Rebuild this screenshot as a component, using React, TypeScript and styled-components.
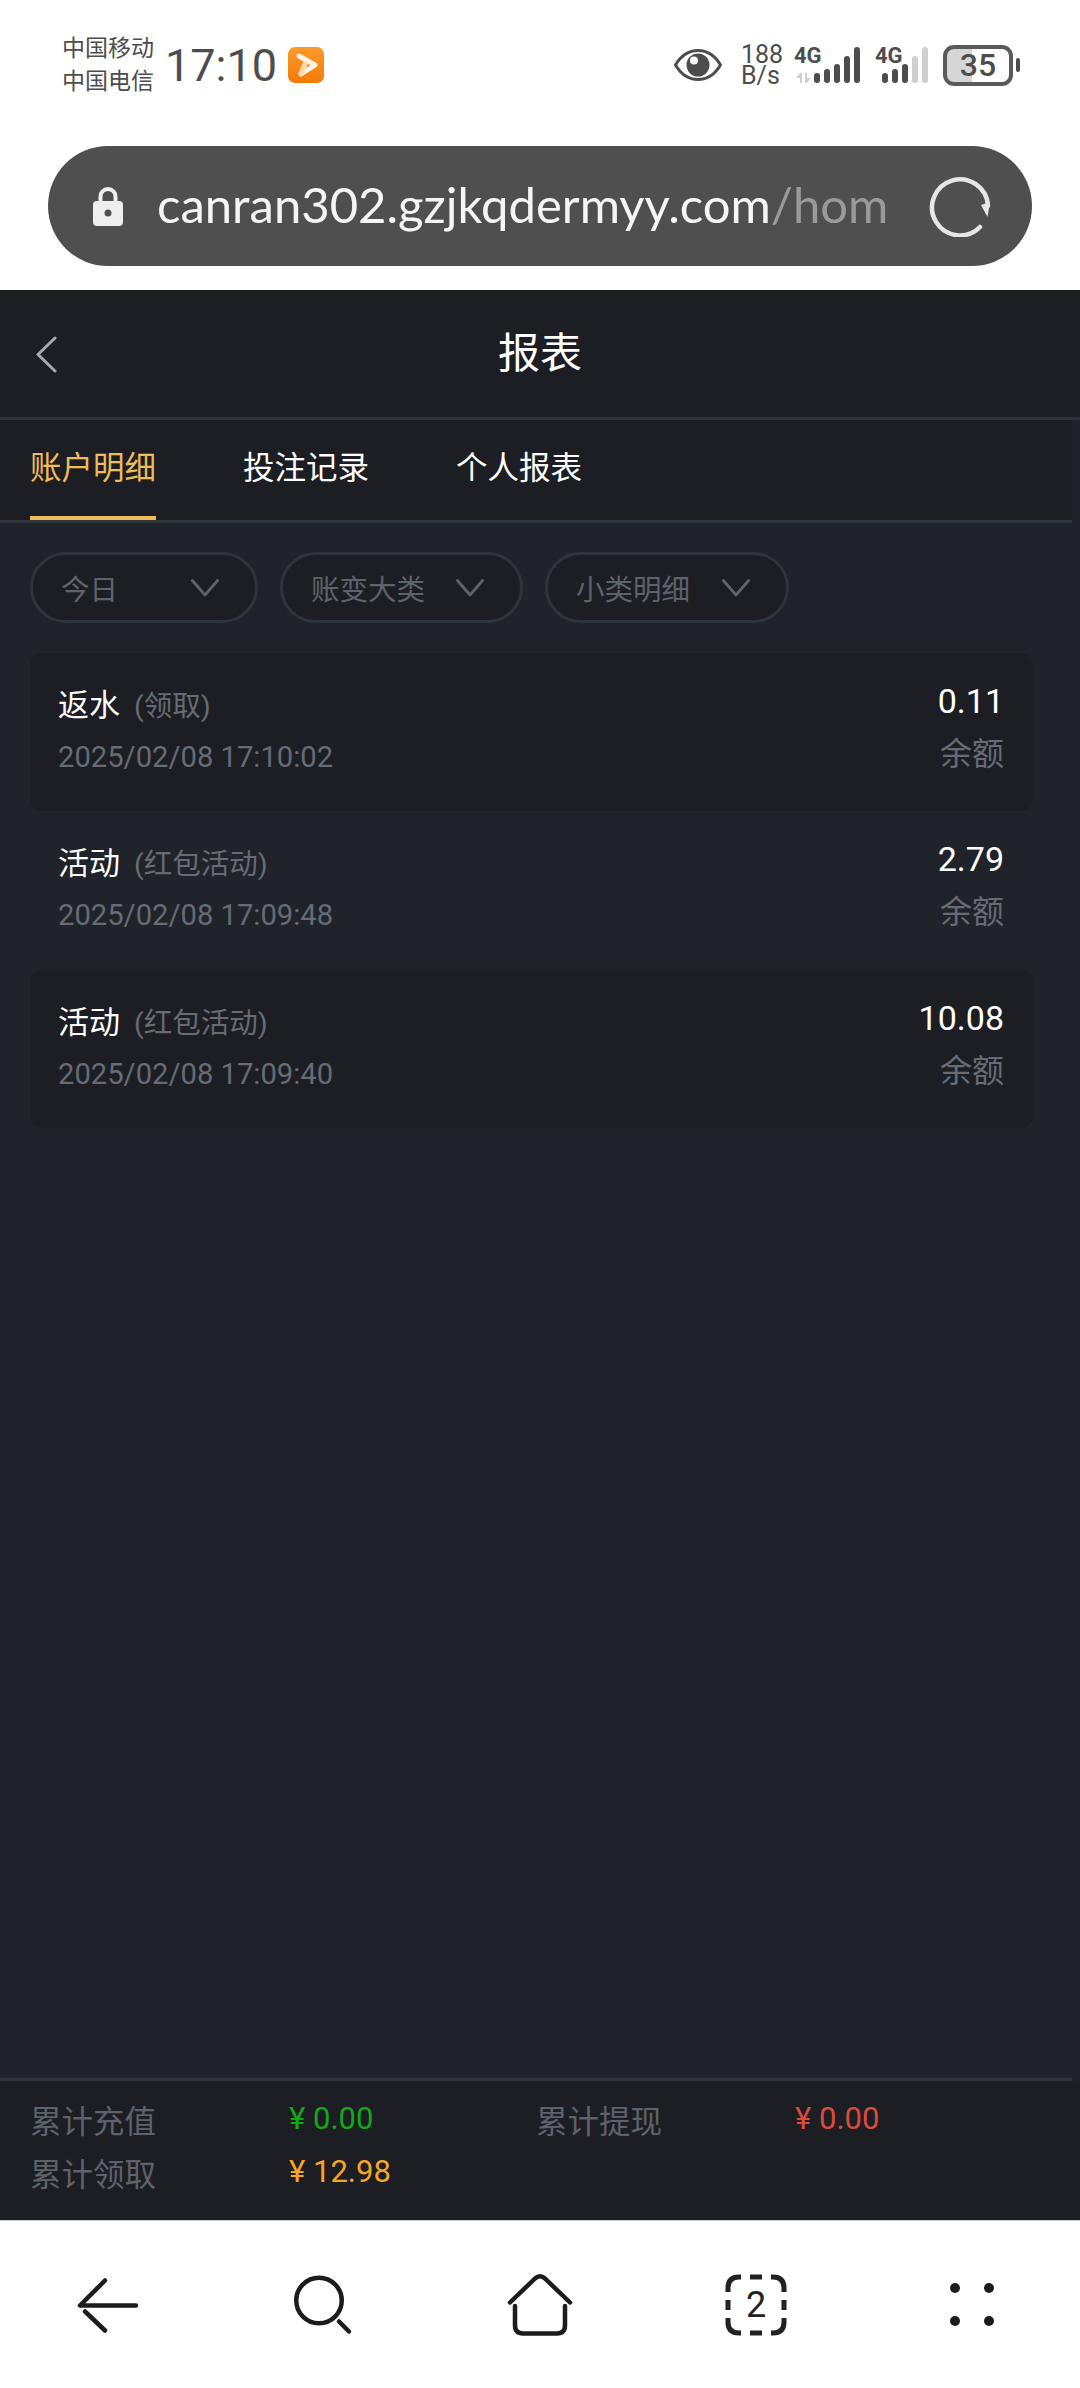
import styled, { createGlobalStyle } from "styled-components";

const GlobalStyle = createGlobalStyle`
  html, body {
    margin: 0;
    padding: 0;
    background: #fff;
  }
  * {
    box-sizing: border-box;
  }
`;

const sans = `Roboto, "Noto Sans CJK SC", sans-serif`;
const narrow = `"Liberation Sans Narrow", Roboto, sans-serif`;

const records = [
  { title: "返水", sub: "(领取)", time: "2025/02/08 17:10:02", amount: "0.11" },
  { title: "活动", sub: "(红包活动)", time: "2025/02/08 17:09:48", amount: "2.79" },
  { title: "活动", sub: "(红包活动)", time: "2025/02/08 17:09:40", amount: "10.08" },
];

const barHeights = [10, 14, 19, 27, 36];

const ChevronDown = () => (
  <svg width="30" height="20" viewBox="0 0 30 20" fill="none">
    <path d="M1.5 2 L15 17.5 L28.5 2" stroke="#5e626b" strokeWidth="3" strokeLinecap="round" strokeLinejoin="round" />
  </svg>
);

const Signal = ({ lit }: { lit: number }) => (
  <svg width="46" height="36" viewBox="0 0 46 36">
    {barHeights.map((h, i) => (
      <rect key={i} x={i * 10} y={36 - h} width="6" height={h} rx="3" fill={i < lit ? "#4d4d4d" : "#cfcfcf"} />
    ))}
  </svg>
);

export default function App() {
  return (
    <>
      <GlobalStyle />
      <Page>
        <TopArea>
          <StatusBar>
            <StatusLeft>
              <Carriers>
                <span>中国移动</span>
                <span>中国电信</span>
              </Carriers>
              <Clock>17:10</Clock>
              <AppBadge>
                <svg width="36" height="36" viewBox="0 0 36 36" fill="none" strokeLinecap="round" strokeLinejoin="round">
                  <path d="M11 9 L27 18 L13 27" stroke="#fff3e2" strokeWidth="5" />
                  <path d="M17 17 L13 26" stroke="#ffd9ac" strokeWidth="5" />
                </svg>
              </AppBadge>
            </StatusLeft>
            <StatusRight>
              <svg width="48" height="32" viewBox="0 0 48 32">
                <path d="M1.5 16 C8 5 16 1.5 24 1.5 C32 1.5 40 5 46.5 16 C40 27 32 30.5 24 30.5 C16 30.5 8 27 1.5 16 Z" fill="none" stroke="#4d4d4d" strokeWidth="3" />
                <circle cx="24" cy="16" r="11.5" fill="#4d4d4d" />
                <circle cx="20" cy="11.5" r="4" fill="#fff" />
              </svg>
              <Speed>
                <span>188</span>
                <span>B/s</span>
              </Speed>
              <NetGroup $width={66}>
                <NetLabel>4G</NetLabel>
                <NetArrows>
                  <svg width="16" height="10" viewBox="0 0 16 10" fill="#cfcfcf">
                    <path d="M5 0 V10 H7 V0 Z M5 0 L1 5 H5 Z" />
                    <path d="M10 0 H12 V10 H10 Z M12 10 L16 5 H12 Z" />
                  </svg>
                </NetArrows>
                <Signal lit={5} />
              </NetGroup>
              <NetGroup $width={53}>
                <NetLabel>4G</NetLabel>
                <Signal lit={3} />
              </NetGroup>
              <Battery>
                <BatteryBody>35</BatteryBody>
                <BatteryTip />
              </Battery>
            </StatusRight>
          </StatusBar>
          <UrlBar>
            <svg width="30" height="40" viewBox="0 0 30 40">
              <path d="M7.5 17 V10.5 a7.5 7.5 0 0 1 15 0 V17" fill="none" stroke="#eee" strokeWidth="4" />
              <rect x="0" y="15" width="30" height="25" rx="4" fill="#eee" />
              <circle cx="15" cy="27" r="3.5" fill="#4f4f4f" />
            </svg>
            <UrlText>
              canran302.gzjkqdermyy.com<UrlPath>/hom</UrlPath>
            </UrlText>
            <svg width="62" height="62" viewBox="0 0 62 62" fill="none">
              <path d="M51 52 A28 28 0 1 1 59 31" stroke="#e6e6e6" strokeWidth="4.5" strokeLinecap="round" />
              <path d="M52 30 L61 27 L58.5 42 Z" fill="#e6e6e6" />
            </svg>
          </UrlBar>
        </TopArea>

        <Header>
          <BackButton>
            <svg width="22" height="37" viewBox="0 0 22 37" fill="none">
              <path d="M20 2 L3 18.5 L20 35" stroke="#a5aab2" strokeWidth="3" strokeLinecap="round" strokeLinejoin="round" />
            </svg>
          </BackButton>
          <HeaderTitle>报表</HeaderTitle>
        </Header>

        <Tabs>
          <Tab $active>账户明细</Tab>
          <Tab>投注记录</Tab>
          <Tab>个人报表</Tab>
        </Tabs>

        <Main>
          <Filters>
            <Chip $width={228}>
              今日
              <ChevronDown />
            </Chip>
            <Chip $width={243}>
              账变大类
              <ChevronDown />
            </Chip>
            <Chip $width={244}>
              小类明细
              <ChevronDown />
            </Chip>
          </Filters>
          <List>
            {records.map((r, i) => (
              <Row key={r.time} $striped={i % 2 === 0}>
                <div>
                  <RowTitle>
                    {r.title}
                    <RowSub>{r.sub}</RowSub>
                  </RowTitle>
                  <RowTime>{r.time}</RowTime>
                </div>
                <RowRight>
                  <Amount>{r.amount}</Amount>
                  <Balance>余额</Balance>
                </RowRight>
              </Row>
            ))}
          </List>
        </Main>

        <FooterRule />
        <Summary>
          <SummaryItem>
            <SummaryLabel>累计充值</SummaryLabel>
            <SummaryValue $color="#12a913">¥ 0.00</SummaryValue>
          </SummaryItem>
          <SummaryItem>
            <SummaryLabel>累计提现</SummaryLabel>
            <SummaryValue $color="#d94c3d">¥ 0.00</SummaryValue>
          </SummaryItem>
          <SummaryItem>
            <SummaryLabel>累计领取</SummaryLabel>
            <SummaryValue $color="#f5a623">¥ 12.98</SummaryValue>
          </SummaryItem>
        </Summary>

        <BottomNav>
          <NavCell>
            <svg width="62" height="56" viewBox="0 0 62 56" fill="none" stroke="#1c1c1c" strokeWidth="4.5" strokeLinecap="round" strokeLinejoin="round">
              <path d="M28 3.5 L3 28.5 H59" />
              <path d="M8 34.5 L28 53.5" />
            </svg>
          </NavCell>
          <NavCell>
            <svg width="62" height="62" viewBox="0 0 62 62" fill="none" stroke="#1c1c1c" strokeWidth="4.5" strokeLinecap="round">
              <circle cx="26" cy="26.5" r="22.75" />
              <path d="M46 47.5 L56 57.5" />
            </svg>
          </NavCell>
          <NavCell>
            <svg width="66" height="66" viewBox="0 0 66 66" fill="none" stroke="#1c1c1c" strokeWidth="4.5" strokeLinecap="round" strokeLinejoin="round">
              <path d="M3 30.5 L28 6.5 Q33 2 38 6.5 L63 30.5" />
              <path d="M8 34 V53 Q8 61.5 16 61.5 H50 Q58 61.5 58 53 V34" />
            </svg>
          </NavCell>
          <NavCell>
            <TabCount>
              <svg width="62" height="62" viewBox="0 0 62 62" fill="none" stroke="#222" strokeWidth="5">
                <path d="M16 3 H14 Q3 3 3 14 V18" />
                <path d="M46 3 H48 Q59 3 59 14 V18" />
                <path d="M16 59 H14 Q3 59 3 48 V44" />
                <path d="M46 59 H48 Q59 59 59 48 V44" />
                <path d="M25 3 H37 M25 59 H37 M3 26 V36 M59 26 V36" />
              </svg>
              <TabDigit>2</TabDigit>
            </TabCount>
          </NavCell>
          <NavCell>
            <Dots>
              <Dot />
              <Dot />
              <Dot />
              <Dot />
            </Dots>
          </NavCell>
        </BottomNav>
      </Page>
    </>
  );
}

const Page = styled.div`
  width: 1080px;
  height: 2388px;
  display: flex;
  flex-direction: column;
  background: #202329;
  font-family: ${sans};
  overflow: hidden;
`;

const TopArea = styled.div`
  height: 290px;
  background: #fff;
  padding-top: 35px;
`;

const StatusBar = styled.div`
  height: 60px;
  padding: 0 60px 0 62px;
  display: flex;
  align-items: center;
  justify-content: space-between;
  color: #4d4d4d;
`;

const StatusLeft = styled.div`
  display: flex;
  align-items: center;
`;

const Carriers = styled.div`
  display: flex;
  flex-direction: column;
  font-size: 23px;
  line-height: 33px;
  width: 103px;
`;

const Clock = styled.div`
  font-size: 45px;
  width: 123px;
`;

const AppBadge = styled.div`
  width: 36px;
  height: 36px;
  border-radius: 7px;
  background: linear-gradient(180deg, #fb9a2a, #f37a08);
  display: flex;
`;

const StatusRight = styled.div`
  display: flex;
  align-items: center;
`;

const Speed = styled.div`
  display: flex;
  flex-direction: column;
  margin-left: 19px;
  font-family: ${narrow};
  font-size: 25px;
  line-height: 21px;
  width: 53px;
`;

const NetGroup = styled.div<{ $width: number }>`
  display: flex;
  align-items: flex-end;
  justify-content: flex-end;
  position: relative;
  width: ${(p) => p.$width}px;
  height: 36px;
  margin-right: 15px;

  &:last-of-type {
    margin-right: 14px;
  }
`;

const NetLabel = styled.span`
  position: absolute;
  left: 0;
  top: 0;
  font-family: ${narrow};
  font-size: 22px;
  line-height: 18px;
  font-weight: 700;
`;

const NetArrows = styled.span`
  position: absolute;
  left: 1px;
  bottom: 0;
  display: flex;
`;

const Battery = styled.div`
  display: flex;
  align-items: center;
  gap: 3px;
`;

const BatteryBody = styled.div`
  width: 70px;
  height: 41px;
  border: 4px solid #5a5a5a;
  border-radius: 11px;
  background: linear-gradient(90deg, #d6d6d6 41%, #fff 41%);
  font-size: 32px;
  font-weight: 500;
  line-height: 33px;
  text-align: center;
`;

const BatteryTip = styled.div`
  width: 4px;
  height: 14px;
  border-radius: 2px;
  background: #4d4d4d;
`;

const UrlBar = styled.div`
  margin: 51px 48px 0;
  height: 120px;
  border-radius: 60px;
  background: #4f4f4f;
  padding: 0 41px 0 45px;
  display: flex;
  align-items: center;
`;

const UrlText = styled.div`
  flex: 1;
  margin-left: 34px;
  padding-bottom: 4px;
  font-family: Lato, sans-serif;
  font-size: 49px;
  color: #f5f5f5;
  white-space: nowrap;
  overflow: hidden;
`;

const UrlPath = styled.span`
  color: #9a9a9a;
`;

const Header = styled.div`
  height: 130px;
  background: #1c1e23;
  border-bottom: 3px solid #2f333c;
  display: flex;
  align-items: center;
  justify-content: center;
  position: relative;
`;

const BackButton = styled.div`
  position: absolute;
  left: 35px;
  top: 46px;
  display: flex;
`;

const HeaderTitle = styled.div`
  margin-bottom: 8px;
  font-size: 42px;
  color: #fff;
`;

const Tabs = styled.div`
  width: 1072px;
  height: 103px;
  padding-left: 30px;
  display: flex;
  gap: 87px;
  background: #1c1e23;
  border-bottom: 3px solid #2f333c;
`;

const Tab = styled.div<{ $active?: boolean }>`
  width: 126px;
  height: 100px;
  padding-bottom: 6px;
  display: flex;
  align-items: center;
  justify-content: center;
  font-size: 31.5px;
  white-space: nowrap;
  color: ${(p) => (p.$active ? "#eebc5c" : "#fff")};
  border-bottom: 4px solid ${(p) => (p.$active ? "#eebc5c" : "transparent")};
`;

const Main = styled.div`
  flex: 1;
  padding: 29px 47px 0 30px;
`;

const Filters = styled.div`
  display: flex;
  gap: 22px;
`;

const Chip = styled.div<{ $width: number }>`
  width: ${(p) => p.$width}px;
  height: 71px;
  padding: 0 36px 0 28px;
  display: flex;
  align-items: center;
  justify-content: space-between;
  border: 3px solid #2f333c;
  border-radius: 36px;
  background: #1c1e23;
  color: #5e626b;
  font-size: 28.5px;

  svg {
    width: 28px;
  }
`;

const List = styled.div`
  margin-top: 30px;
`;

const Row = styled.div<{ $striped: boolean }>`
  height: 158.33px;
  padding: 25px 29px 0 28px;
  display: flex;
  justify-content: space-between;
  border-radius: 12px;
  background: ${(p) => (p.$striped ? "#1c1e23" : "transparent")};
`;

const RowTitle = styled.div`
  padding-top: 3px;
  font-size: 31px;
  line-height: 50px;
  color: #fff;
`;

const RowSub = styled.span`
  margin-left: 14px;
  font-size: 28.5px;
  color: #666b75;
`;

const RowTime = styled.div`
  font-size: 29.2px;
  line-height: 50px;
  color: #666b75;
`;

const RowRight = styled.div`
  text-align: right;
`;

const Amount = styled.div`
  font-size: 34px;
  line-height: 46px;
  color: #fff;
`;

const Balance = styled.div`
  margin-top: 7px;
  font-size: 32px;
  line-height: 46px;
  color: #666b75;
`;

const FooterRule = styled.div`
  width: 1072px;
  height: 3px;
  background: #2f333c;
`;

const Summary = styled.div`
  height: 140px;
  padding: 11px 0 0 30px;
  display: flex;
  flex-wrap: wrap;
  align-content: flex-start;
  background: #1c1e23;
  border-bottom: 1px solid #c9c9c9;
`;

const SummaryItem = styled.div`
  width: 506px;
  height: 53px;
  display: flex;
  align-items: center;
`;

const SummaryLabel = styled.div`
  width: 259px;
  font-size: 31.5px;
  color: #5e626b;
`;

const SummaryValue = styled.div<{ $color: string }>`
  font-size: 31px;
  color: ${(p) => p.$color};
`;

const BottomNav = styled.div`
  height: 167px;
  background: #fff;
  display: grid;
  grid-template-columns: repeat(5, 1fr);
`;

const NavCell = styled.div`
  display: flex;
  align-items: center;
  justify-content: center;
`;

const TabCount = styled.div`
  width: 62px;
  height: 62px;
  position: relative;
  display: flex;
`;

const TabDigit = styled.span`
  position: absolute;
  inset: 0;
  display: flex;
  align-items: center;
  justify-content: center;
  font-size: 36px;
  color: #222;
`;

const Dots = styled.div`
  display: grid;
  grid-template-columns: repeat(2, 10px);
  gap: 23px 24px;
`;

const Dot = styled.div`
  width: 10px;
  height: 10px;
  border-radius: 50%;
  background: #1c1c1c;
`;
